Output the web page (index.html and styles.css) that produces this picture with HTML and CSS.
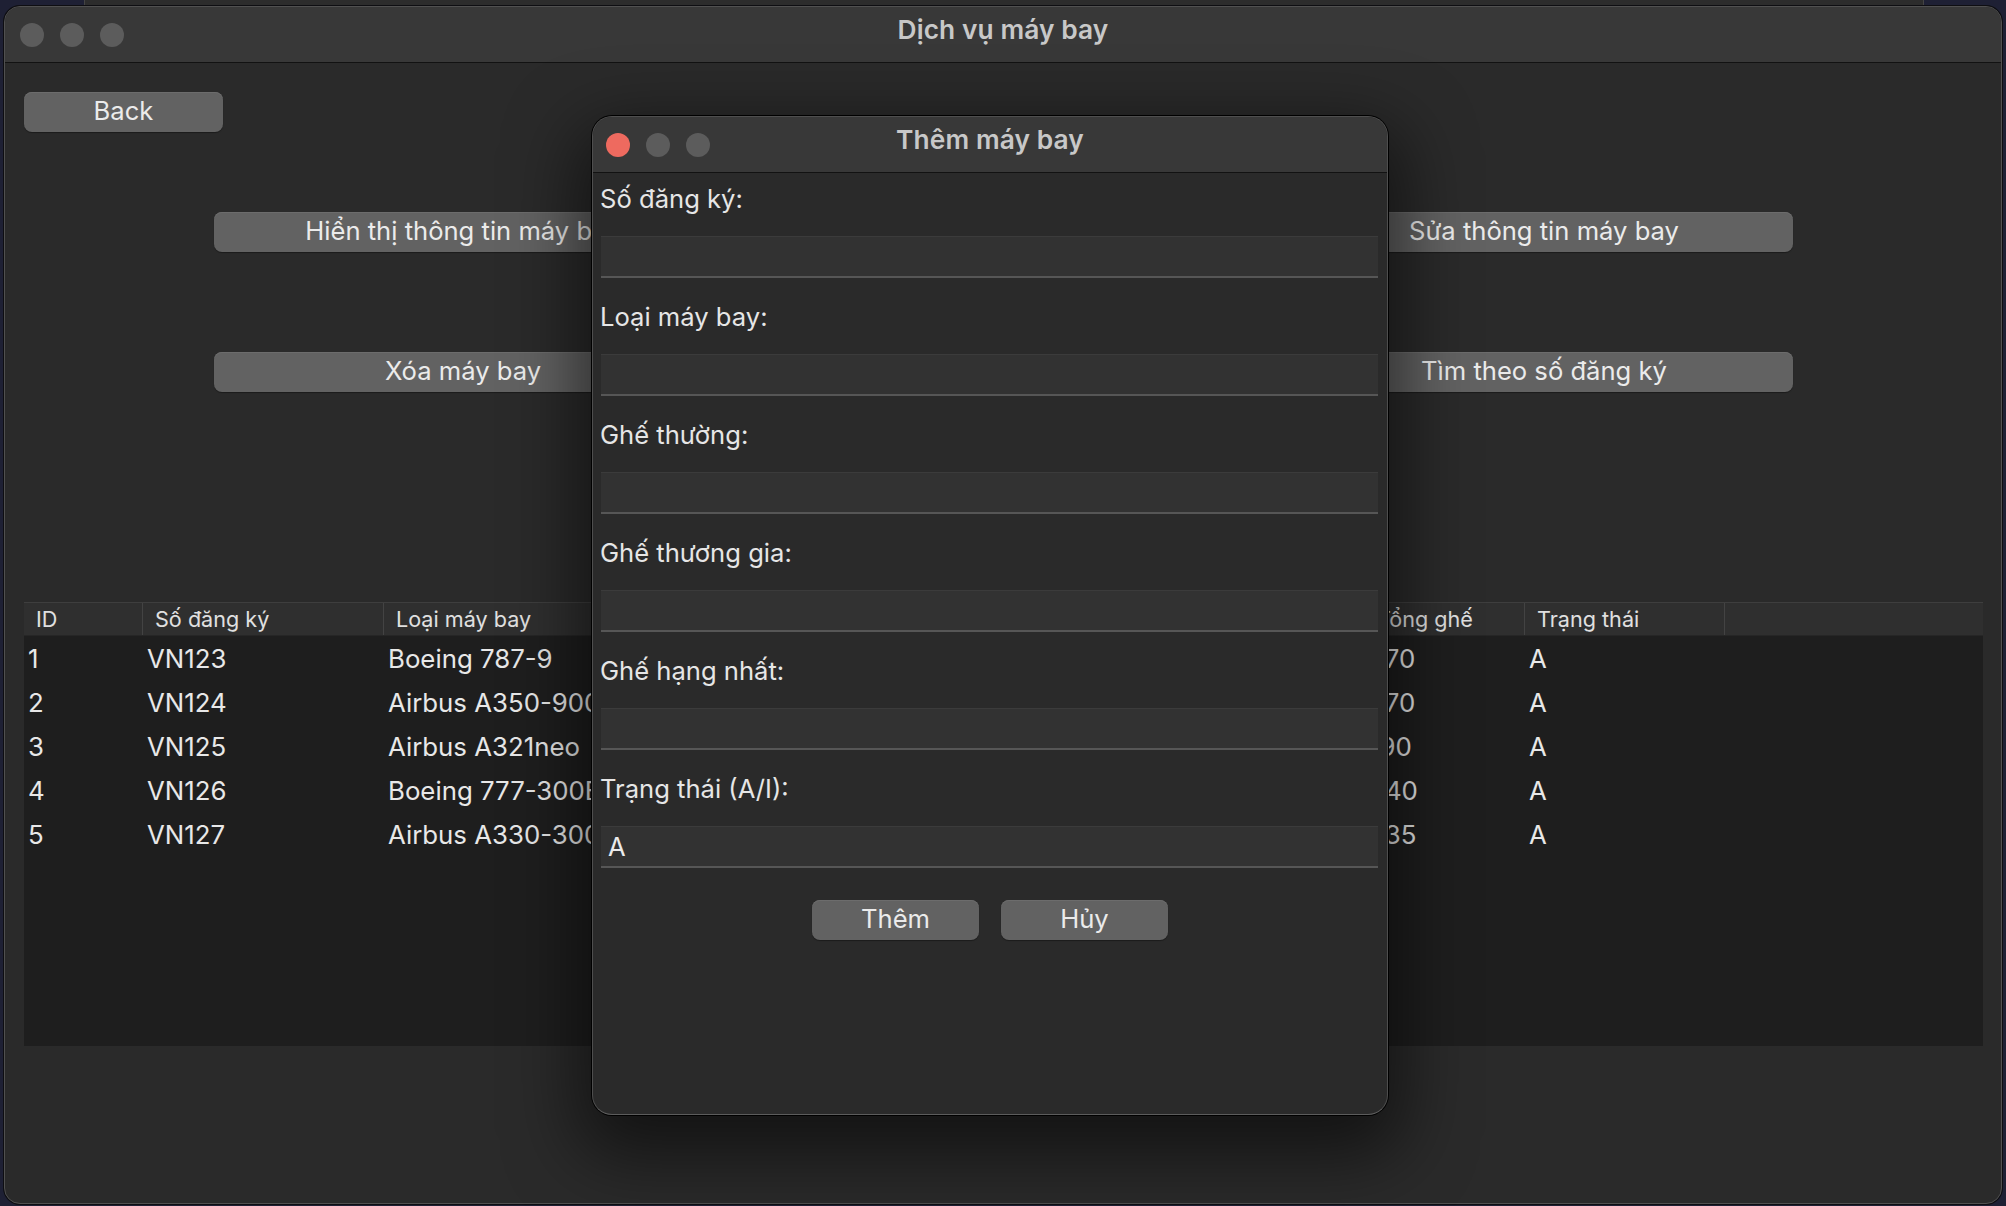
FILE: index.html
```html
<!DOCTYPE html>
<html lang="vi">
<head>
<meta charset="utf-8">
<title>Dịch vụ máy bay</title>
<link rel="stylesheet" href="styles.css">
</head>
<body>
<div class="desktop">
  <div class="behind-window"></div>

  <div class="window main-window">
    <div class="titlebar">
      <div class="lights">
        <span class="light"></span><span class="light"></span><span class="light"></span>
      </div>
      <div class="title">Dịch vụ máy bay</div>
      <div class="spacer"></div>
    </div>
    <div class="content">
      <div class="back-row"><button class="btn back-btn">Back</button></div>
      <div class="action-grid">
        <button class="btn action-btn">Hiển thị thông tin máy bay</button>
        <button class="btn action-btn">Thêm máy bay</button>
        <button class="btn action-btn">Sửa thông tin máy bay</button>
        <button class="btn action-btn">Xóa máy bay</button>
        <div class="action-empty"></div>
        <button class="btn action-btn">Tìm theo số đăng ký</button>
      </div>
      <div class="table">
        <div class="thead">
          <div class="th">ID</div>
          <div class="th">Số đăng ký</div>
          <div class="th">Loại máy bay</div>
          <div class="th">Ghế thường</div>
          <div class="th">Ghế thương gia</div>
          <div class="th">Ghế hạng nhất</div>
          <div class="th">Tổng ghế</div>
          <div class="th">Trạng thái</div>
          <div class="th"></div>
        </div>
        <div class="tbody">
          <div class="tr"><div class="td">1</div><div class="td">VN123</div><div class="td">Boeing 787-9</div><div class="td">220</div><div class="td">28</div><div class="td">22</div><div class="td">270</div><div class="td">A</div><div class="td"></div></div>
          <div class="tr"><div class="td">2</div><div class="td">VN124</div><div class="td">Airbus A350-900</div><div class="td">220</div><div class="td">29</div><div class="td">21</div><div class="td">270</div><div class="td">A</div><div class="td"></div></div>
          <div class="tr"><div class="td">3</div><div class="td">VN125</div><div class="td">Airbus A321neo</div><div class="td">170</div><div class="td">16</div><div class="td">4</div><div class="td">190</div><div class="td">A</div><div class="td"></div></div>
          <div class="tr"><div class="td">4</div><div class="td">VN126</div><div class="td">Boeing 777-300ER</div><div class="td">280</div><div class="td">40</div><div class="td">20</div><div class="td">340</div><div class="td">A</div><div class="td"></div></div>
          <div class="tr"><div class="td">5</div><div class="td">VN127</div><div class="td">Airbus A330-300</div><div class="td">200</div><div class="td">25</div><div class="td">10</div><div class="td">235</div><div class="td">A</div><div class="td"></div></div>
        </div>
      </div>
    </div>
  </div>

  <div class="window dialog">
    <div class="titlebar dialog-titlebar">
      <div class="lights">
        <span class="light red"></span><span class="light"></span><span class="light"></span>
      </div>
      <div class="title">Thêm máy bay</div>
      <div class="spacer"></div>
    </div>
    <div class="form">
      <div class="field"><label class="label">Số đăng ký:</label><div class="input"></div></div>
      <div class="field"><label class="label">Loại máy bay:</label><div class="input"></div></div>
      <div class="field"><label class="label">Ghế thường:</label><div class="input"></div></div>
      <div class="field"><label class="label">Ghế thương gia:</label><div class="input"></div></div>
      <div class="field"><label class="label">Ghế hạng nhất:</label><div class="input"></div></div>
      <div class="field"><label class="label">Trạng thái (A/I):</label><div class="input">A</div></div>
      <div class="form-buttons">
        <button class="btn small-btn">Thêm</button>
        <button class="btn small-btn">Hủy</button>
      </div>
    </div>
  </div>
</div>
</body>
</html>
```

FILE: styles.css
```css
* { box-sizing: border-box; }

html, body {
  margin: 0;
  padding: 0;
}

body {
  width: 2006px;
  height: 1206px;
  overflow: hidden;
  background: #1e2034;
  font-family: "Inter", "Liberation Sans", sans-serif;
  color: #e8e8e8;
}

.desktop {
  position: relative;
  width: 2006px;
  height: 1206px;
}

.behind-window {
  position: absolute;
  left: 84px;
  top: -20px;
  width: 1840px;
  height: 30px;
  background: #2c2c2c;
  border: 1px solid #444;
}

.window {
  position: absolute;
  display: flex;
  flex-direction: column;
  background: #2a2a2a;
  overflow: hidden;
}

.main-window {
  left: 4px;
  top: 6px;
  width: 1998px;
  height: 1198px;
  border: 1px solid #505050;
  border-radius: 16px;
  box-shadow: 0 0 0 1px #0e0e12;
}

.titlebar {
  flex: none;
  height: 56px;
  background: #383838;
  border-bottom: 1px solid #121212;
  display: grid;
  grid-template-columns: 1fr auto 1fr;
  align-items: center;
}

.lights {
  display: flex;
  gap: 16px;
  padding-left: 15px;
}

.light {
  width: 24px;
  height: 24px;
  border-radius: 50%;
  background: #5c5c5c;
}

.light.red {
  background: #ee6a5f;
}

.title {
  font-size: 26.3px;
  font-weight: 600;
  color: #c8c8c8;
  letter-spacing: 0.1px;
  padding-bottom: 10px;
}

.content {
  flex: 1;
  padding: 29px 18px 0 19px;
  display: flex;
  flex-direction: column;
}

.btn {
  font-family: inherit;
  font-size: 25.6px;
  color: #ebebeb;
  background: #626262;
  border: none;
  border-radius: 8px;
  box-shadow: inset 0 1px 0 #6c6c6c, 0 1px 1px rgba(0,0,0,0.35);
  padding: 0 0 2px 0;
  line-height: 1;
}

.back-row {
  display: flex;
}

.back-btn {
  width: 199px;
  height: 40px;
}

.action-grid {
  margin-top: 80px;
  display: grid;
  grid-template-columns: repeat(3, 498px);
  grid-auto-rows: 40px;
  column-gap: 42.5px;
  row-gap: 100px;
  justify-content: center;
}

.table {
  margin-top: 210px;
  height: 444px;
  display: flex;
  flex-direction: column;
  background: #1e1e1e;
}

.thead, .tr {
  display: grid;
  grid-template-columns: 118px 241px 240px 247px 247px 247px 160px 200px 1fr;
}

.thead {
  height: 34px;
  background: #2f2f2f;
  border-top: 1px solid #3e3e3e;
  border-bottom: 1px solid #262626;
}

.th {
  font-size: 21.6px;
  color: #e0e0e0;
  padding-left: 12px;
  line-height: 32px;
  border-left: 1px solid #434343;
  white-space: nowrap;
  overflow: hidden;
}

.th:first-child {
  border-left: none;
}

.tbody {
  padding-top: 0;
}

.tr {
  height: 44px;
  align-items: center;
}

.td {
  font-size: 25.8px;
  color: #e8e8e8;
  padding-left: 5px;
  white-space: nowrap;
  overflow: hidden;
}

.td:first-child {
  padding-left: 4px;
}

/* Dialog */
.dialog {
  left: 592px;
  top: 116px;
  width: 796px;
  height: 999px;
  border: 1px solid #4e4e4e;
  border-bottom-color: #5c5c5c;
  border-radius: 20px;
  box-shadow: 0 0 0 1px #000, 0 26px 70px 14px rgba(0,0,0,0.55);
}

.dialog-titlebar {
  height: 56px;
}

.dialog-titlebar .lights {
  padding-left: 13px;
  gap: 16px;
}

.dialog-titlebar .light {
  width: 24px;
  height: 24px;
}

.form {
  display: flex;
  flex-direction: column;
  padding: 0 9px 0 7px;
}

.field {
  display: flex;
  flex-direction: column;
}

.label {
  height: 50px;
  line-height: 52px;
  font-size: 25.6px;
  color: #e6e6e6;
  margin-bottom: 13px;
}

.input {
  height: 42px;
  margin-left: 1px;
  margin-bottom: 13px;
  background: #323232;
  border-top: 1px solid #3b3b3b;
  border-bottom: 2px solid #565656;
  font-size: 25.6px;
  line-height: 39px;
  padding-left: 7px;
  color: #ebebeb;
}

.form-buttons {
  margin-top: 19px;
  display: flex;
  justify-content: center;
  gap: 22px;
  padding-left: 2px;
}

.small-btn {
  width: 167px;
  height: 40px;
}
```
